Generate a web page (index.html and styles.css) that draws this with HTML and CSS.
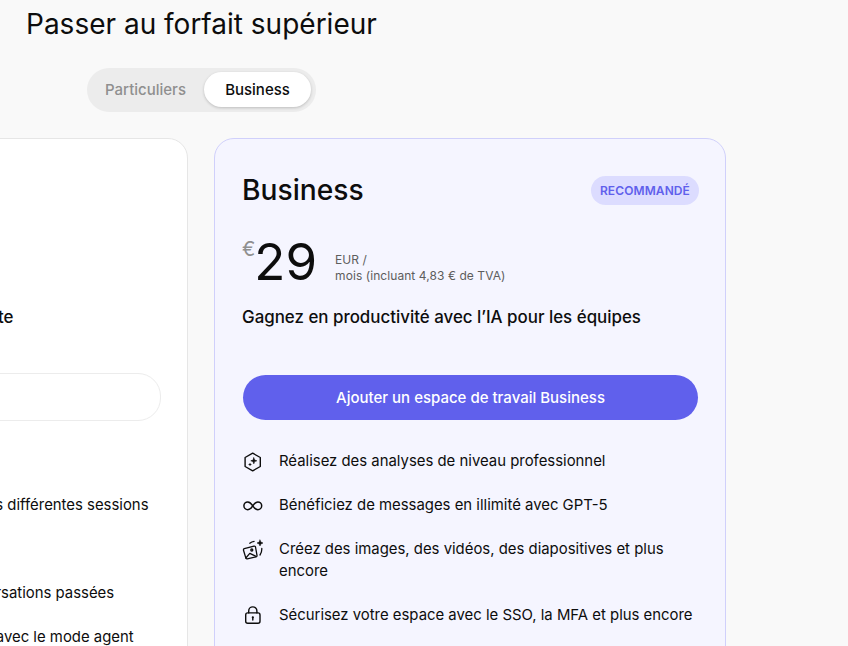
FILE: index.html
```html
<!DOCTYPE html>
<html lang="fr">
<head>
    <meta charset="UTF-8">
    <meta name="viewport" content="width=device-width, initial-scale=1.0">
    <title>Passer au forfait supérieur</title>
    <link rel="stylesheet" href="styles.css">
</head>
<body>
    <h1 class="page-title">Passer au forfait supérieur</h1>
    <div class="switch-row">
        <div class="switch">
            <span class="switch-item">Particuliers</span>
            <span class="switch-item switch-active">Business</span>
        </div>
    </div>
    <div class="plans">
        <section class="plan plan-basic">
            <div class="plan-head"></div>
            <div class="price-row"></div>
            <p class="plan-tagline">Bénéficiez d'une expérience complète</p>
            <div class="plan-btn plan-btn-ghost"></div>
            <ul class="features">
                <li class="feature-empty"></li>
                <li><span class="feature-icon"></span><span>Conservez tout le contexte au fil des différentes sessions</span></li>
                <li class="feature-empty"></li>
                <li><span class="feature-icon"></span><span>Retrouvez le fil précis de vos conversations passées</span></li>
                <li><span class="feature-icon"></span><span>Accomplissez aussi plus de tâches avec le mode agent</span></li>
            </ul>
        </section>
        <section class="plan plan-featured">
            <div class="plan-head">
                <h2>Business</h2>
                <span class="badge">RECOMMANDÉ</span>
            </div>
            <div class="price-row">
                <span class="currency">€</span>
                <span class="amount">29</span>
                <span class="price-note">EUR /<br>mois (incluant 4,83 € de TVA)</span>
            </div>
            <p class="plan-tagline">Gagnez en productivité avec l’IA pour les équipes</p>
            <div class="plan-btn">Ajouter un espace de travail Business</div>
            <ul class="features">
                <li>
                    <span class="feature-icon">
                        <svg viewBox="0 0 20 20" width="20" height="20" fill="none" stroke="#0d0d0d" stroke-width="1.4" stroke-linejoin="round" stroke-linecap="round">
                            <path d="M9.700 1.200l7.600 4.300v9l-7.600 4.300-7.600-4.300v-9z"/>
                            <path d="M10.800 5.800l.8 2.200 2.200.8-2.200.8-.8 2.200-.8-2.200-2.200-.8 2.200-.8z" fill="#0d0d0d" stroke-width="0.6"/>
                            <path d="M7 11.500v2M6 12.500h2" stroke-width="0.9"/>
                        </svg>
                    </span>
                    <span>Réalisez des analyses de niveau professionnel</span>
                </li>
                <li>
                    <span class="feature-icon">
                        <svg viewBox="0 0 20 20" width="20" height="20" fill="none" stroke="#0d0d0d" stroke-width="1.5" stroke-linecap="round">
                            <path d="M9.800 9.800C8.400 7.600 7 5.900 4.800 5.900a3.900 3.900 0 0 0 0 7.800c2.200 0 3.600-1.700 5-3.900s2.800-3.900 5-3.900a3.900 3.900 0 0 1 0 7.800c-2.200 0-3.600-1.700-5-3.900z"/>
                        </svg>
                    </span>
                    <span>Bénéficiez de messages en illimité avec GPT-5</span>
                </li>
                <li>
                    <span class="feature-icon">
                        <svg viewBox="0 0 20 20" width="20" height="20" fill="none" stroke="#0d0d0d" stroke-width="1.3" stroke-linecap="round" stroke-linejoin="round">
                            <path d="M1.300 8.700l9.700-2.600a1.200 1.200 0 0 1 1.500.9l1.500 8.400a1.200 1.200 0 0 1-1 1.400l-8.800 2a1.200 1.200 0 0 1-1.400-.9L.500 10.200a1.200 1.200 0 0 1 .8-1.500z"/>
                            <path d="M2.800 18l4-4.600 5.800 2.800"/>
                            <circle cx="8.800" cy="10" r="1"/>
                            <path d="M6.800 3.200c1.200-1 2.700-1.700 4.300-1.900M18.800 8.500c.1 2.500-.5 4.700-1.800 6.500"/>
                            <path d="M17 0l.9 2.100 2.100.9-2.100.9-.9 2.100-.9-2.100-2.100-.9 2.100-.9z" fill="#0d0d0d" stroke-width="0.5"/>
                        </svg>
                    </span>
                    <span>Créez des images, des vidéos, des diapositives et plus encore</span>
                </li>
                <li>
                    <span class="feature-icon">
                        <svg viewBox="0 0 20 20" width="20" height="20" fill="none" stroke="#0d0d0d" stroke-width="1.4" stroke-linecap="round" stroke-linejoin="round">
                            <rect x="2.700" y="6.900" width="14.300" height="10.300" rx="2"/>
                            <path d="M5.700 6.900V5a4.100 4.100 0 0 1 8.200 0v1.900"/>
                            <circle cx="9.800" cy="11.300" r="1.100" fill="#0d0d0d" stroke="none"/>
                            <path d="M9.800 11.500v2.500"/>
                        </svg>
                    </span>
                    <span>Sécurisez votre espace avec le SSO, la MFA et plus encore</span>
                </li>
            </ul>
        </section>
    </div>
</body>
</html>
```

FILE: styles.css
```css
html, body {
    height: 100%;
}
body {
    margin: 0;
    display: flex;
    flex-direction: column;
    background-color: #f9f9f9;
    color: #0d0d0d;
    font-family: Inter, "Liberation Sans", sans-serif;
    overflow: hidden;
}
.page-title {
    margin: 0;
    padding: 7px 0 0 26px;
    font-size: 28px;
    line-height: 34px;
    font-weight: 400;
}
.switch-row {
    display: flex;
    padding: 27px 0 0 87px;
}
.switch {
    display: flex;
    align-items: center;
    height: 44px;
    width: 229px;
    box-sizing: border-box;
    padding: 0 5px 1px 0;
    background: #ececec;
    border-radius: 22px;
}
.switch-item {
    flex: 1;
    text-align: center;
    font-size: 15px;
    font-weight: 500;
    color: #8f8f8f;
    line-height: 35px;
}
.switch-active {
    flex: 0 0 107px;
    background: #fff;
    color: #0d0d0d;
    border-radius: 18px;
    box-shadow: 0 1px 3px rgba(0, 0, 0, 0.2);
}
.plans {
    display: flex;
    flex: 1;
    min-height: 0;
    overflow: hidden;
    gap: 26px;
    margin: 26px 0 0 -324px;
}
.plan {
    flex: 0 0 512px;
    box-sizing: border-box;
    height: 620px;
    padding: 28px 26px 0 27px;
    background: #fff;
    border: 1px solid #e6e6e6;
    border-radius: 20px;
}
.plan-featured {
    background: #f5f5ff;
    border-color: #d0d0fb;
}
.plan-head {
    display: flex;
    justify-content: space-between;
    align-items: center;
    height: 46px;
}
.plan-head h2 {
    margin: 0;
    font-size: 28.200px;
    font-weight: 500;
}
.badge {
    background: #dcdcff;
    color: #6060ec;
    font-size: 12px;
    letter-spacing: 0.1px;
    font-weight: 600;
    line-height: 29px;
    padding: 0 9px;
    border-radius: 15px;
}
.price-row {
    display: flex;
    height: 56px;
    margin-top: 21px;
}
.currency {
    margin: 3px -1px 0 0;
    font-size: 20px;
    line-height: 24px;
    color: #8f8f8f;
}
.amount {
    font-size: 51px;
    line-height: 56px;
}
.price-note {
    margin: 18px 0 0 18px;
    font-size: 12px;
    letter-spacing: 0.07px;
    line-height: 16px;
    color: #5d5d5d;
}
.plan-tagline {
    margin: 15px 0 0;
    font-size: 16.900px;
    line-height: 24px;
    font-weight: 500;
}
.plan-btn {
    margin: 46px 1px 0;
    height: 45px;
    line-height: 45px;
    text-align: center;
    font-size: 15px;
    font-weight: 500;
    color: #fff;
    background: #6060ec;
    border-radius: 23px;
}
.plan-btn-ghost {
    margin: 44px 0 -1px 1px;
    height: 48px;
    background: #fff;
    border: 1px solid #ececec;
    box-sizing: border-box;
}
.features {
    list-style: none;
    margin: 30px 0 0;
    padding: 0;
    display: flex;
    flex-direction: column;
    gap: 22px;
    font-size: 14.900px;
    line-height: 22px;
}
.features li {
    display: flex;
    gap: 26px;
    min-height: 22px;
    padding-left: 1px;
}
.plan-basic .features li {
    gap: 31px;
}
.feature-icon {
    flex: 0 0 10px;
    width: 10px;
    height: 20px;
    margin-top: 2px;
    display: flex;
}
.feature-icon svg {
    flex: none;
    overflow: visible;
}
```
